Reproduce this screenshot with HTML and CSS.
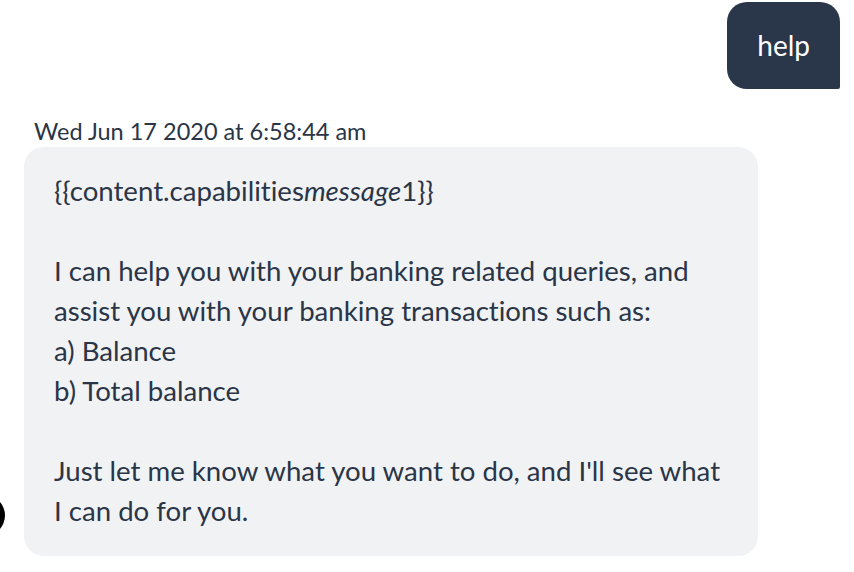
FILE: index.html
```html
<!DOCTYPE html>
<html lang="en">
<head>
  <meta charset="UTF-8">
  <meta name="viewport" content="width=device-width, initial-scale=1.0">
  <title>Chat</title>
  <link rel="stylesheet" href="styles.css">
</head>
<body>
  <div class="chat" role="main">
    <div class="row row-user">
      <div class="bubble-user">help</div>
    </div>

    <div class="row row-bot">
      <div class="avatar" aria-hidden="true"></div>
      <div class="timestamp">Wed Jun 17 2020 at 6:58:44 am</div>
      <div class="bubble-bot">
        <p>{{content.capabilities<em>message</em>1}}</p>
        <p>I can help you with your banking related queries, and<br>
          assist you with your banking transactions such as:<br>
          a) Balance<br>
          b) Total balance</p>
        <p>Just let me know what you want to do, and I'll see what<br>
          I can do for you.</p>
      </div>
    </div>
  </div>
</body>
</html>
```

FILE: styles.css
```css
body {
  font-family: Lato, "Open Sans", sans-serif;
  font-variant-ligatures: none;
  margin: 0;
  color: #2a3547;
  background: #fff;
}

.chat {
  display: flex;
  flex-direction: column;
  padding-top: 2px;
}

.row-user {
  display: flex;
  justify-content: flex-end;
  padding-right: 14px;
}

.bubble-user {
  background-color: #2a364a;
  color: #fff;
  font-size: 28px;
  line-height: 27px;
  padding: 30px 30px;
  border-radius: 20px 20px 2px 20px;
}

.row-bot {
  position: relative;
  margin-top: 28px;
  padding-left: 24px;
}

.avatar {
  position: absolute;
  left: -36px;
  top: 378px;
  width: 41px;
  height: 41px;
  border-radius: 50%;
  background-color: #000;
}

.timestamp {
  font-size: 23.5px;
  line-height: 28px;
  padding-left: 10px;
  margin-bottom: 2px;
}

.bubble-bot {
  width: 674px;
  background-color: #f1f2f4;
  border-radius: 20px;
  padding: 24px 30px 25px;
  font-size: 27.6px;
  line-height: 40px;
}

.bubble-bot p {
  margin: 0 0 40px 0;
  white-space: nowrap;
}

.bubble-bot p:last-child {
  margin-bottom: 0;
}
```
